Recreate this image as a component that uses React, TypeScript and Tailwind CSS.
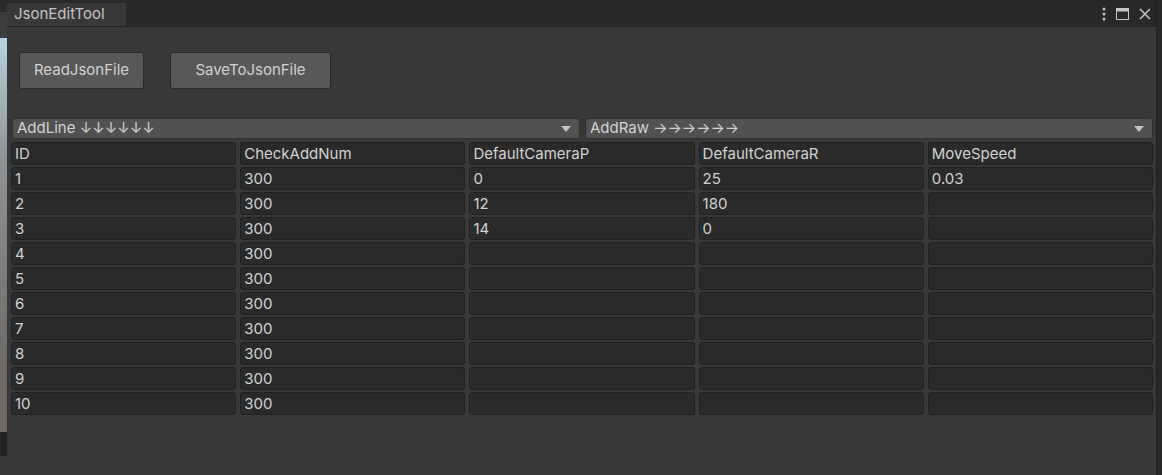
const headers = ['ID', 'CheckAddNum', 'DefaultCameraP', 'DefaultCameraR', 'MoveSpeed']

const rows: string[][] = [
  ['1', '300', '0', '25', '0.03'],
  ['2', '300', '12', '180', ''],
  ['3', '300', '14', '0', ''],
  ['4', '300', '', '', ''],
  ['5', '300', '', '', ''],
  ['6', '300', '', '', ''],
  ['7', '300', '', '', ''],
  ['8', '300', '', '', ''],
  ['9', '300', '', '', ''],
  ['10', '300', '', '', ''],
]

function Cell({ text }: { text: string }) {
  return (
    <div className="h-[23px] rounded-[3px] border border-[#212121] bg-[#2a2a2a] px-[3px] text-[15px] leading-[21px] text-[#d2d2d2] truncate">
      {text}
    </div>
  )
}

function Dropdown({ label }: { label: string }) {
  return (
    <div className="flex-1 h-[21px] rounded-[3px] border border-[#303030] bg-[#515151] flex items-center justify-between pl-[4px] pr-[8px] text-[15px] text-[#d2d2d2]">
      <span>{label}</span>
      <svg width="10" height="6" viewBox="0 0 10 6">
        <path d="M0 0 L10 0 L5 6 Z" fill="#c4c4c4" />
      </svg>
    </div>
  )
}

function Button({ label, w }: { label: string; w: string }) {
  return (
    <button className={`${w} h-[37px] rounded-[3px] border border-[#2a2a2a] bg-[#585858] text-[15px] text-[#d2d2d2] flex items-center justify-center`}>
      {label}
    </button>
  )
}

export default function App() {
  return (
    <div className="w-[1162px] h-[475px] flex bg-[#282828] overflow-hidden" style={{ fontFamily: 'Inter, "Noto Sans", sans-serif' }}>
      {/* scene view peeking on the left */}
      <div className="w-[7px] shrink-0 flex flex-col">
        <div className="h-[12px] bg-[#2a2a2a]" />
        <div className="h-[26px] bg-[#3c3c3c]" />
        <div className="h-[120px] bg-gradient-to-b from-[#b5d4e0] to-[#8f9497]" />
        <div className="h-[200px] bg-gradient-to-b from-[#8f9497] to-[#706b67]" />
        <div className="h-[74px] bg-[#6f6a66]" />
        <div className="h-[24px] bg-[#232323]" />
        <div className="flex-1 bg-[#383838]" />
      </div>

      {/* window */}
      <div className="w-[1149px] shrink-0 flex flex-col">
        {/* tab bar */}
        <div className="h-[27px] flex items-end justify-between bg-[#282828] border-b border-[#232323]">
          <div className="h-[23px] w-[119px] bg-[#383838] rounded-t-[2px] px-[7px] text-[15px] leading-[22px] text-[#c4c4c4]">
            JsonEditTool
          </div>
          <div className="flex items-center gap-[10px] pr-[5px] pb-[5px]">
            <svg width="4" height="14" viewBox="0 0 4 14">
              <circle cx="2" cy="2" r="1.5" fill="#c4c4c4" />
              <circle cx="2" cy="7" r="1.5" fill="#c4c4c4" />
              <circle cx="2" cy="12" r="1.5" fill="#c4c4c4" />
            </svg>
            <svg width="13" height="12" viewBox="0 0 13 12">
              <rect x="0.5" y="0.5" width="12" height="11" fill="none" stroke="#c4c4c4" />
              <rect x="0.5" y="0.5" width="12" height="3" fill="#c4c4c4" />
            </svg>
            <svg width="12" height="12" viewBox="0 0 12 12">
              <path d="M1 1 L11 11 M11 1 L1 11" stroke="#c4c4c4" strokeWidth="1.5" />
            </svg>
          </div>
        </div>

        {/* body */}
        <div className="flex-1 bg-[#383838] flex flex-col">
          <div className="flex gap-[26px] pl-[12px] pt-[25px]">
            <Button label="ReadJsonFile" w="w-[125px]" />
            <Button label="SaveToJsonFile" w="w-[161px]" />
          </div>

          <div className="flex gap-[5px] pl-[5px] mt-[29px] w-[1146px]">
            <Dropdown label="AddLine ↓↓↓↓↓↓" />
            <Dropdown label="AddRaw →→→→→→" />
          </div>

          <div className="grid grid-cols-5 gap-x-[4px] gap-y-[2px] pl-[4px] mt-[3px] w-[1146px]">
            {headers.map((h) => (
              <Cell key={h} text={h} />
            ))}
            {rows.map((r, i) => r.map((c, j) => <Cell key={`${i}-${j}`} text={c} />))}
          </div>
        </div>
      </div>

      {/* neighbour panel on the right */}
      <div className="flex-1 bg-[#282828] border-l border-[#1e1e1e]" />
    </div>
  )
}
